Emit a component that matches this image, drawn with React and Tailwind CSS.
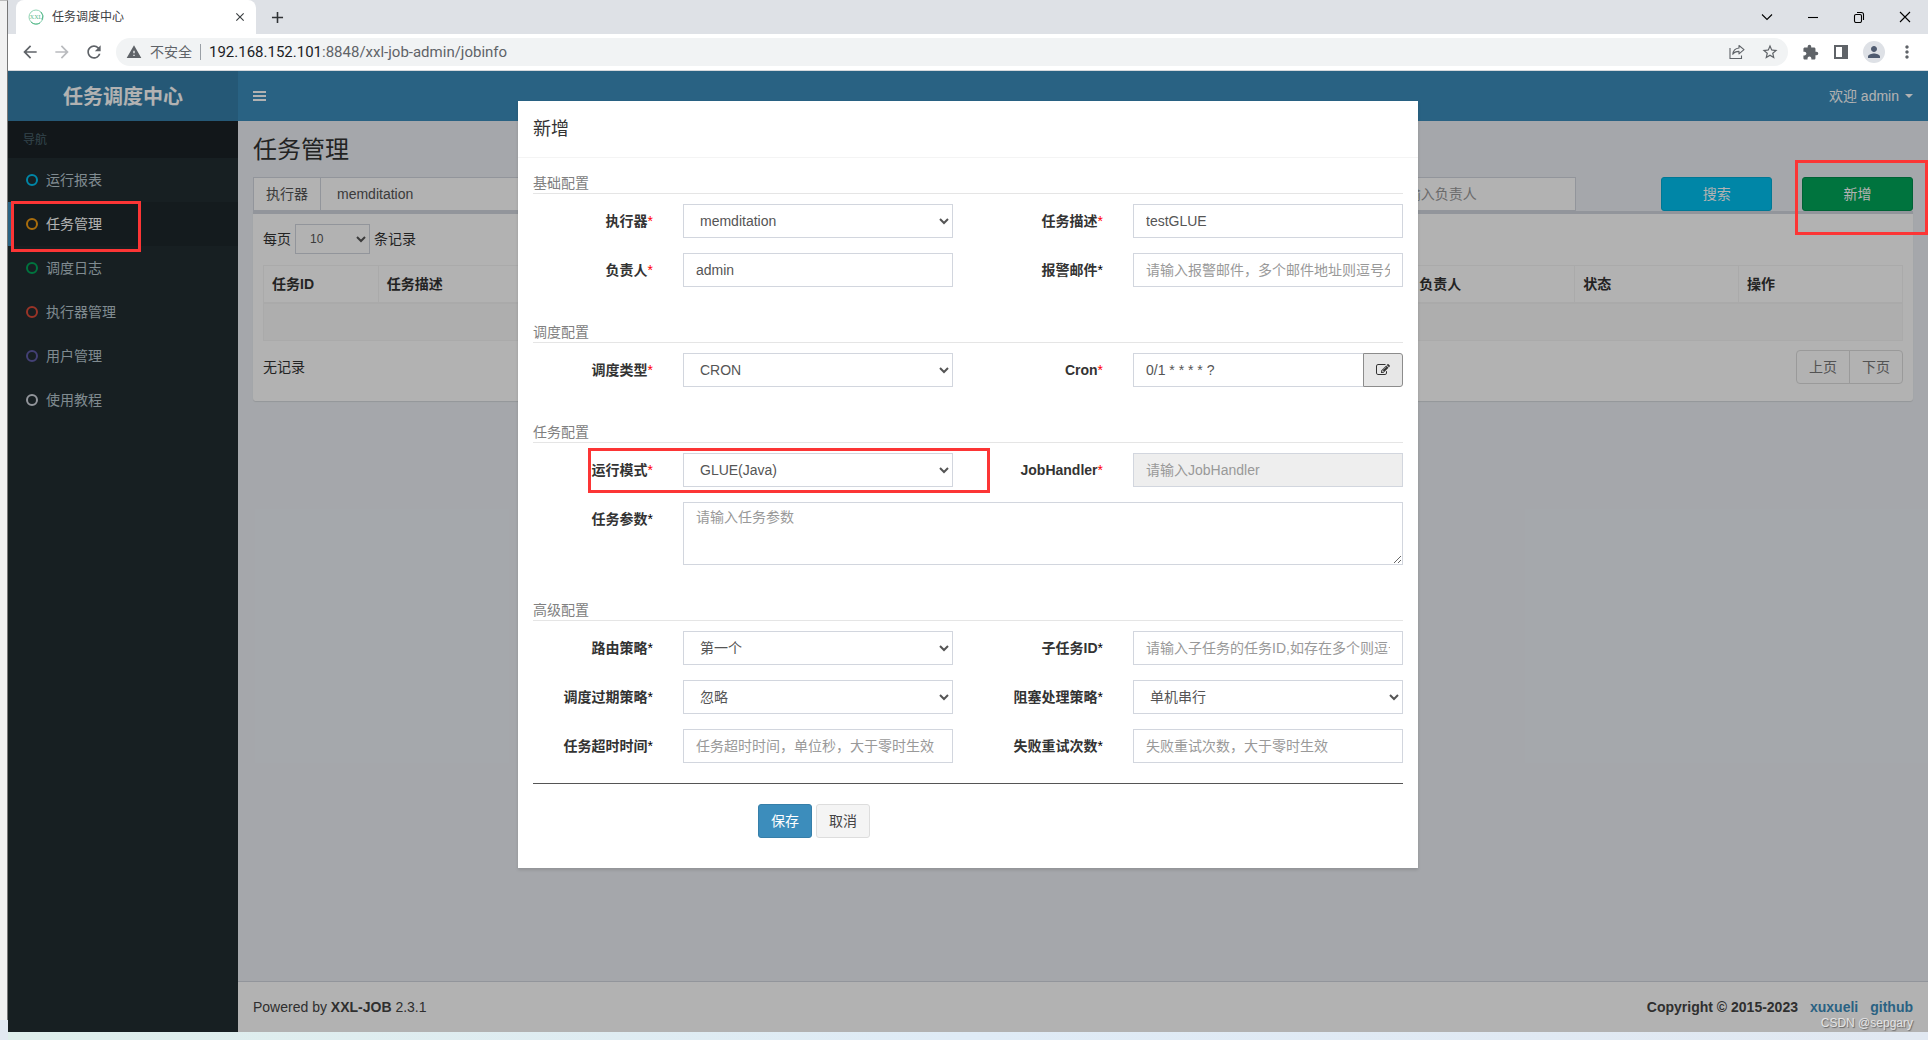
import React from "react";
import {
  MdArrowBack,
  MdArrowForward,
  MdRefresh,
  MdWarning,
  MdStarBorder,
  MdExtension,
  MdPerson,
  MdMoreVert,
  MdClose,
  MdAdd,
} from "react-icons/md";

const control =
  "block h-[34px] w-full rounded-none border border-[#d2d6de] bg-white px-3 text-sm text-[#555] outline-none placeholder:text-[#999] disabled:bg-[#eee]";

const menu = [
  { label: "运行报表", ring: "border-[#00c0ef]" },
  { label: "任务管理", ring: "border-[#f39c12]", active: true },
  { label: "调度日志", ring: "border-[#00a65a]" },
  { label: "执行器管理", ring: "border-[#dd4b39]" },
  { label: "用户管理", ring: "border-[#605ca8]" },
  { label: "使用教程", ring: "border-[#d2d6de]" },
];

function Highlight({ className }) {
  return <span className={"pointer-events-none absolute z-30 border-3 border-[#fc3535] " + className} />;
}

function BrowserTabs() {
  return (
    <div className="flex h-[34px] items-center justify-between bg-[#dee1e6] pl-2">
      <div className="flex h-full items-center">
        <div className="flex h-full w-60 items-center rounded-t-lg bg-white pr-2 pl-3">
          <svg width="16" height="16" viewBox="0 0 16 16" className="mr-2 shrink-0">
            <circle cx="8" cy="8" r="7" fill="none" stroke="#8fd3b4" strokeWidth="1" />
            <path d="M3 13a7 7 0 0 0 9 1M13 3a7 7 0 0 1 1 8" fill="none" stroke="#56b98a" strokeWidth="1" />
            <text x="8" y="10" textAnchor="middle" fontSize="6" fontFamily="Liberation Serif" fill="#56b98a">XXL</text>
          </svg>
          <span className="flex-1 text-xs text-[#3c4043]">任务调度中心</span>
          <button aria-label="关闭标签页" className="flex size-4 items-center justify-center text-[#3c4043]">
            <MdClose size={14} />
          </button>
        </div>
        <button aria-label="新标签页" className="ml-3 text-[#303336]">
          <MdAdd size={19} />
        </button>
      </div>
      <div className="flex h-7 items-center text-black">
        {[
          ["搜索标签页", "M1 3.5l5 5 5-5"],
          ["最小化", "M1 6.5h10"],
          ["还原", "M1.500 5a1.500 1.500 0 0 1 1.500-1.500h4a1.500 1.500 0 0 1 1.500 1.500v5a1.500 1.500 0 0 1-1.500 1.500h-4a1.500 1.500 0 0 1-1.500-1.500zM4 1.500h4.500a2 2 0 0 1 2 2v5.500"],
          ["关闭", "M1 1l10 10M11 1l-10 10"],
        ].map(([label, d]) => (
          <button key={label} aria-label={label} className="flex h-7 w-[46px] items-center justify-center">
            <svg width="12" height="12" viewBox="0 0 12 12" fill="none" stroke="currentColor" strokeWidth="1.1">
              <path d={d} />
            </svg>
          </button>
        ))}
      </div>
    </div>
  );
}

function BrowserToolbar() {
  return (
    <div className="flex h-[37px] items-center border-b border-[#d5d8dc] bg-white text-[#5f6368]">
      <div className="flex w-[108px] items-center gap-3 pl-3">
        <button aria-label="后退"><MdArrowBack size={20} /></button>
        <button aria-label="前进" className="text-[#b9bbbe]"><MdArrowForward size={20} /></button>
        <button aria-label="刷新"><MdRefresh size={20} /></button>
      </div>
      <div className="flex h-7 flex-1 items-center rounded-full bg-[#f1f3f4] pr-[9px] pl-2.5">
        <MdWarning size={16} />
        <span className="ml-2 text-sm">不安全</span>
        <span className="mx-2 h-4 w-px bg-[#9aa0a6]" />
        <span className="flex-1 font-[Roboto,sans-serif] text-[15px]">
          <span className="text-[#202124]">192.168.152.101</span>:8848/xxl-job-admin/jobinfo
        </span>
        <button aria-label="分享" className="mr-4">
          <svg width="16" height="16" viewBox="0 0 16 16" fill="none" stroke="currentColor" strokeWidth="1.1">
            <path d="M1 4v10.500h11.500v-3" />
            <path d="M10 1.500l5 4.200-5 4.200v-2.500c-3 0-5 .8-6.200 2.900.3-3.500 2.400-5.800 6.200-6.300z" strokeLinejoin="round" />
          </svg>
        </button>
        <button aria-label="收藏"><MdStarBorder size={18} /></button>
      </div>
      <div className="flex w-[140px] items-center gap-3.5 pl-3.5">
        <button aria-label="扩展程序"><MdExtension size={17} /></button>
        <button aria-label="侧边栏">
          <svg width="16" height="16" viewBox="0 0 16 16" fill="currentColor">
            <path fillRule="evenodd" d="M1 1h14v14h-14zM3 3v10h6v-10z" />
          </svg>
        </button>
        <button aria-label="用户" className="flex size-[22px] items-center justify-center rounded-full bg-[#dee1e6] text-[#4f5b70]">
          <MdPerson size={18} />
        </button>
        <button aria-label="更多" className="flex w-4 justify-center"><MdMoreVert size={20} className="shrink-0" /></button>
      </div>
    </div>
  );
}

function Sidebar() {
  return (
    <aside className="flex w-[230px] shrink-0 flex-col bg-[#222d32]">
      <div className="flex h-[50px] items-center justify-center bg-[#367fa9] pt-0.5 text-xl font-bold text-white">任务调度中心</div>
      <div className="flex h-[37px] items-center bg-[#1a2226] px-[15px] text-xs text-[#4b646f]">导航</div>
      <nav className="flex flex-col">
        {menu.map((m) => (
          <a
            key={m.label}
            href="#"
            className={
              "relative flex h-11 items-center border-l-3 pl-[15px] text-sm " +
              (m.active ? "border-[#3c8dbc] bg-[#1e282c] text-white" : "border-transparent text-[#b8c7ce]")
            }
          >
            <span className={"mr-2 size-3 rounded-full border-2 " + m.ring} />
            {m.label}
            {m.active && <Highlight className="-top-px -bottom-1.5 left-0 w-[130px]" />}
          </a>
        ))}
      </nav>
    </aside>
  );
}

function SearchBar() {
  return (
    <div className="-mx-[15px] grid grid-cols-12 text-sm">
      <div className="col-span-3 flex px-[15px]">
        <label htmlFor="group" className="flex h-[34px] shrink-0 items-center border border-r-0 border-[#d2d6de] bg-white px-3 text-[#555]">
          执行器
        </label>
        <select id="group" className={control}>
          <option>memditation</option>
        </select>
      </div>
      <div className="col-span-2 col-start-9 px-[15px]">
        <input aria-label="负责人" placeholder="请输入负责人" className={control + " max-w-[196px]"} />
      </div>
      <div className="px-[15px]">
        <button className="h-[34px] w-full rounded-[3px] border border-[#00acd6] bg-[#00c0ef] text-white">搜索</button>
      </div>
      <div className="px-[15px]">
        <div className="relative">
          <button className="h-[34px] w-full rounded-[3px] border border-[#008d4c] bg-[#00a65a] text-white">新增</button>
          <Highlight className="-top-[17px] -right-[15px] -bottom-6 -left-[7px]" />
        </div>
      </div>
    </div>
  );
}

const cell = "border border-[#f4f4f4] p-2 text-left";

function JobTable() {
  return (
    <section className="rounded-b-[3px] border-t-3 border-[#d2d6de] bg-white px-2.5 pt-2.5 pb-[17px] text-sm text-[#333] shadow-[0_1px_1px_rgba(0,0,0,0.1)]">
      <label className="flex items-center">
        每页
        <select className="mx-1 h-[30px] w-[75px] border border-[#d2d6de] bg-white px-2.5 text-xs text-[#555]">
          <option>10</option>
        </select>
        条记录
      </label>
      <table className="mt-[11px] w-full table-fixed border-collapse leading-5">
        <thead>
          <tr className="border-b-2 border-[#f4f4f4]">
            <th className={cell + " w-[7%]"}>任务ID</th>
            <th className={cell}>任务描述</th>
            <th className={cell + " w-[10%]"}>负责人</th>
            <th className={cell + " w-[10%]"}>状态</th>
            <th className={cell + " w-[10%]"}>操作</th>
          </tr>
        </thead>
        <tbody>
          <tr className="h-[37px] bg-[#f9f9f9]">
            <td colSpan={5} className={cell} />
          </tr>
        </tbody>
      </table>
      <div className="mt-[9px] flex items-center justify-between">
        <span>无记录</span>
        <div className="flex text-[#777]">
          <button className="h-[34px] rounded-l border border-[#ddd] px-3">上页</button>
          <button className="-ml-px h-[34px] rounded-r border border-[#ddd] px-3">下页</button>
        </div>
      </div>
    </section>
  );
}

function Label({ text, required, htmlFor }) {
  return (
    <label htmlFor={htmlFor} className="col-span-2 px-[15px] pt-[7px] text-right leading-5 font-bold">
      {text}
      <span className={required ? "font-normal text-[#f00]" : "font-normal text-black"}>*</span>
    </label>
  );
}

function Field({ id, text, required, option, ...rest }) {
  return (
    <>
      <Label htmlFor={id} text={text} required={required} />
      <div className="col-span-4 px-[15px]">
        {option ? (
          <select id={id} className={control}>
            <option>{option}</option>
          </select>
        ) : (
          <input id={id} className={control} {...rest} />
        )}
      </div>
    </>
  );
}

function Row({ children }) {
  return <div className="relative -mx-[15px] mb-[15px] grid grid-cols-12">{children}</div>;
}

function Group({ title, children, last }) {
  return (
    <fieldset className={last ? "" : "mb-5"}>
      <legend className="mb-2.5 block w-full border-b border-[#e5e5e5] leading-5 text-[#808080]">{title}</legend>
      {children}
    </fieldset>
  );
}

function AddJobDialog() {
  return (
    <div role="dialog" aria-label="新增" className="w-[900px] max-w-full bg-white text-sm text-[#333] shadow-[0_2px_3px_rgba(0,0,0,0.125)]">
      <h4 className="border-b border-[#f4f4f4] p-[15px] text-lg leading-[26px]">新增</h4>
      <form className="p-[15px]" onSubmit={(e) => e.preventDefault()}>
        <Group title="基础配置">
          <Row>
            <Field id="jobGroup" text="执行器" required option="memditation" />
            <Field id="jobDesc" text="任务描述" required defaultValue="testGLUE" />
          </Row>
          <Row>
            <Field id="author" text="负责人" required defaultValue="admin" />
            <Field id="email" text="报警邮件" placeholder="请输入报警邮件，多个邮件地址则逗号分隔" />
          </Row>
        </Group>
        <Group title="调度配置">
          <Row>
            <Field id="scheduleType" text="调度类型" required option="CRON" />
            <Label htmlFor="cron" text="Cron" required />
            <div className="col-span-4 flex px-[15px]">
              <input id="cron" defaultValue="0/1 * * * * ?" className={control + " border-r-0"} />
              <button type="button" aria-label="编辑 Cron" className="flex h-[34px] w-10 shrink-0 items-center justify-center rounded-r-[3px] border border-[#8c8c8c] bg-[#e7e7e7] text-[#333]">
                <svg width="14" height="14" viewBox="0 0 1792 1792" fill="currentColor">
                  <path d="M888 1184l116-116-152-152-116 116v56h96v96h56zm440-720q-16-16-33 1l-350 350q-17 17-1 33t33-1l350-350q17-17 1-33zm80 594v190q0 119-84.5 203.500t-203.500 84.500h-832q-119 0-203.500-84.500t-84.500-203.500v-832q0-119 84.500-203.500t203.500-84.500h832q63 0 117 25 15 7 18 23 3 17-9 29l-49 49q-14 14-32 8-23-6-45-6h-832q-66 0-113 47t-47 113v832q0 66 47 113t113 47h832q66 0 113-47t47-113v-126q0-13 9-22l64-64q15-15 35-7t20 29zm-96-738l288 288-672 672h-288v-288zm444 132l-92 92-288-288 92-92q28-28 68-28t68 28l152 152q28 28 28 68t-28 68z" />
                </svg>
              </button>
            </div>
          </Row>
        </Group>
        <Group title="任务配置">
          <Row>
            <Field id="glueType" text="运行模式" required option="GLUE(Java)" />
            <Field id="handler" text="JobHandler" required disabled placeholder="请输入JobHandler" />
            <Highlight className="-top-[5px] -bottom-1.5 left-[70px] w-[402px]" />
          </Row>
          <Row>
            <Label htmlFor="param" text="任务参数" />
            <div className="col-span-10 px-[15px]">
              <textarea
                id="param"
                placeholder="请输入任务参数"
                className="block h-[63px] w-full resize border border-[#d2d6de] bg-white px-3 py-1 leading-5 text-[#555] outline-none placeholder:text-[#999]"
              />
            </div>
          </Row>
        </Group>
        <Group title="高级配置" last>
          <Row>
            <Field id="route" text="路由策略" option="第一个" />
            <Field id="child" text="子任务ID" placeholder="请输入子任务的任务ID,如存在多个则逗号分隔" />
          </Row>
          <Row>
            <Field id="misfire" text="调度过期策略" option="忽略" />
            <Field id="block" text="阻塞处理策略" option="单机串行" />
          </Row>
          <Row>
            <Field id="timeout" text="任务超时时间" placeholder="任务超时时间，单位秒，大于零时生效" />
            <Field id="retry" text="失败重试次数" placeholder="失败重试次数，大于零时生效" />
          </Row>
        </Group>
        <hr className="mt-[5px] mb-5 border-[#555]" />
        <div className="-mx-[15px] mb-[15px] grid grid-cols-12">
          <div className="col-span-6 col-start-4 flex gap-1 px-[15px]">
            <button className="h-[34px] rounded-[3px] border border-[#367fa9] bg-[#3c8dbc] px-3 text-white">保存</button>
            <button type="button" className="h-[34px] rounded-[3px] border border-[#ddd] bg-[#f4f4f4] px-3 text-[#444]">取消</button>
          </div>
        </div>
      </form>
    </div>
  );
}

export default function App() {
  return (
    <div className="flex min-h-screen bg-[#e2e9f2] font-['Liberation_Sans','Noto_Sans_CJK_SC',sans-serif]">
      <div className="mb-5 w-2 shrink-0 border-t border-r border-t-[#bbb] border-r-[#777] bg-[#f1f1f1]" />
      <div className="flex min-w-0 flex-1 flex-col">
        <BrowserTabs />
        <BrowserToolbar />
        <div className="relative flex flex-1">
          <Sidebar />
          <div className="flex min-w-0 flex-1 flex-col bg-[#ecf0f5]">
            <header className="flex h-[50px] items-center justify-between bg-[#3c8dbc] px-[15px] text-sm text-white">
              <button aria-label="切换导航">
                <svg width="13" height="11" viewBox="0 0 13 11" fill="currentColor">
                  <path d="M0 0h13v2h-13zM0 4h13v2h-13zM0 8h13v2h-13z" />
                </svg>
              </button>
              <button className="flex items-center">
                欢迎 admin
                <span className="ml-1.5 border-x-4 border-t-4 border-x-transparent" />
              </button>
            </header>
            <main className="flex-1 px-[15px] pt-4">
              <h1 className="mb-3.5 text-2xl leading-[26px] text-[#333]">任务管理</h1>
              <SearchBar />
              <JobTable />
            </main>
            <footer className="flex justify-between border-t border-[#d2d6de] bg-white p-[15px] text-sm leading-5 text-[#444]">
              <span>Powered by <b>XXL-JOB</b> 2.3.1</span>
              <span className="flex gap-3 font-bold">
                Copyright © 2015-2023
                <a href="#" className="text-[#3c8dbc]">xuxueli</a>
                <a href="#" className="text-[#3c8dbc]">github</a>
              </span>
            </footer>
          </div>
          <div className="absolute inset-0 z-10 flex items-start justify-center bg-black/30 pt-[30px]">
            <AddJobDialog />
          </div>
          <span className="absolute right-[15px] bottom-0 z-20 text-xs leading-[18px] text-[#e4e4e4] [text-shadow:1px_1px_1px_#666]">CSDN @sepgary</span>
        </div>
        <div className="h-2 bg-linear-to-r from-[#deeeeb] via-[#dfebf6] to-[#e1e8f1]" />
      </div>
    </div>
  );
}
